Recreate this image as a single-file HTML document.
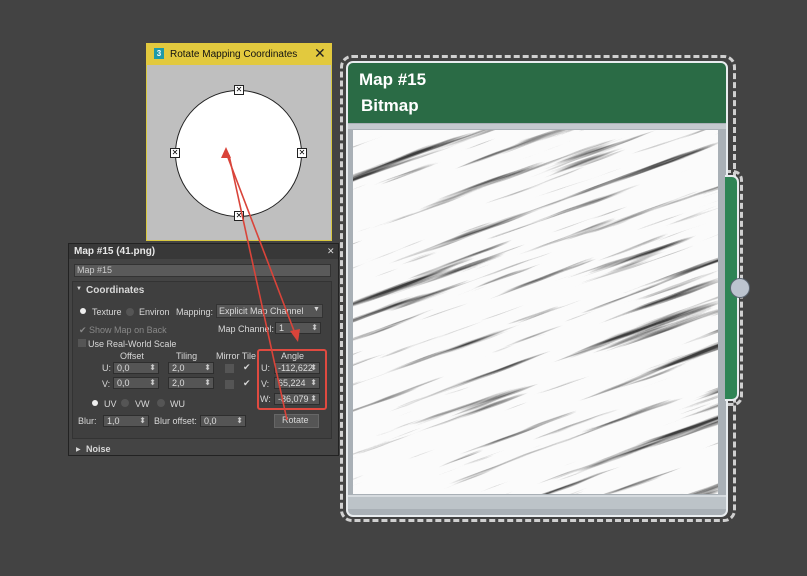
<!DOCTYPE html>
<html><head><meta charset="utf-8"><style>
*{margin:0;padding:0;box-sizing:border-box}
html,body{width:807px;height:576px;overflow:hidden}
body{background:#434343;position:relative;font-family:"Liberation Sans",Arial,sans-serif}
.abs{position:absolute}
.t{position:absolute;color:#d8d8d8;font-size:9px;white-space:nowrap}
.sp{position:absolute;background:#555;border:1px solid #2e2e2e;color:#ddd;font-size:9px;height:12px;line-height:10px;padding-left:3px}
.sp:after{content:"⬍";position:absolute;right:2px;top:0;font-size:8px;color:#ccc}
</style></head><body>

<div class="abs" style="left:340px;top:55px;width:396px;height:467px;border:3px dashed #d0d0d0;border-radius:12px"></div>
<div class="abs" style="left:725px;top:170px;width:18px;height:236px;border:3px dashed #d0d0d0;border-left:none;border-radius:0 10px 10px 0"></div>
<div class="abs" style="left:346px;top:61px;width:382px;height:456px;background:#a9b0b6;border:2px solid #e8ecef;border-radius:7px"></div>
<div class="abs" style="left:348px;top:63px;width:378px;height:60px;background:#2a6b45;border-radius:5px 5px 0 0"></div>
<div class="abs" style="left:359px;top:70px;color:#fff;font-weight:bold;font-size:17px">Map #15</div>
<div class="abs" style="left:361px;top:96px;color:#fff;font-weight:bold;font-size:17px">Bitmap</div>
<div class="abs" style="left:348px;top:124px;width:378px;height:5px;background:#c4c9ce"></div>
<div class="abs" style="left:348px;top:495px;width:378px;height:14px;background:#bcc3c8;border-top:2px solid #d5dade"></div>
<svg class="abs" style="left:353px;top:130px;overflow:hidden" width="365" height="364">
<defs>
<filter id="f" x="0" y="0" width="100%" height="100%">
<feTurbulence type="fractalNoise" baseFrequency="0.005 0.12" numOctaves="4" seed="7"/>
<feColorMatrix type="matrix" values="0 0 0 0 0  0 0 0 0 0  0 0 0 0 0  -5 0 0 0 1.95"/>
</filter>
</defs>
<rect width="365" height="364" fill="#fbfbfb"/>
<g transform="rotate(-20 182 182)" opacity=".75">
<rect x="-150" y="-150" width="665" height="665" filter="url(#f)"/>
</g>
</svg>
<div class="abs" style="left:725px;top:175px;width:14px;height:226px;background:#2f8455;border:2px solid #e8ecef;border-left:none;border-radius:0 7px 7px 0"></div>
<div class="abs" style="left:730px;top:278px;width:20px;height:20px;border-radius:50%;background:#bcc4cf;border:1px solid #5a6470"></div>

<div class="abs" style="left:146px;top:43px;width:186px;height:198px;background:#bfbfbf;border:1px solid #d8c840"></div>
<div class="abs" style="left:146px;top:43px;width:186px;height:22px;background:#e2c93e"></div>
<div class="abs" style="left:154px;top:48px;width:10px;height:11px;background:#1f9aa8;color:#fff;font-size:8px;text-align:center;line-height:11px;font-weight:bold">3</div>
<div class="abs" style="left:170px;top:49px;font-size:10px;color:#111">Rotate Mapping Coordinates</div>
<div class="abs" style="left:314px;top:45px;font-size:14px;color:#222">✕</div>
<div class="abs" style="left:175px;top:90px;width:127px;height:127px;border-radius:50%;background:#fff;border:1px solid #222"></div>
<div class="abs" style="left:234px;top:85px;width:10px;height:10px;background:#fff;border:1px solid #222;font-size:8px;line-height:8px;text-align:center">✕</div>
<div class="abs" style="left:170px;top:148px;width:10px;height:10px;background:#fff;border:1px solid #222;font-size:8px;line-height:8px;text-align:center">✕</div>
<div class="abs" style="left:297px;top:148px;width:10px;height:10px;background:#fff;border:1px solid #222;font-size:8px;line-height:8px;text-align:center">✕</div>
<div class="abs" style="left:234px;top:211px;width:10px;height:10px;background:#fff;border:1px solid #222;font-size:8px;line-height:8px;text-align:center">✕</div>

<div class="abs" style="left:68px;top:243px;width:271px;height:213px;background:#444;border:1px solid #222"></div>
<div class="abs" style="left:69px;top:244px;width:269px;height:15px;background:#383838"></div>
<div class="t" style="left:74px;top:246px;font-size:10px;color:#e8e8e8;font-weight:bold">Map #15 (41.png)</div>
<div class="t" style="left:327px;top:246px;font-size:9px">✕</div>
<div class="abs" style="left:74px;top:264px;width:257px;height:13px;background:#5a5a5a;border:1px solid #333"></div>
<div class="t" style="left:77px;top:265px;color:#ccc">Map #15</div>
<div class="abs" style="left:72px;top:281px;width:260px;height:158px;background:#3f3f3f;border:1px solid #333"></div>
<div class="t" style="left:76px;top:286px;font-size:6px">▼</div>
<div class="t" style="left:86px;top:285px;font-weight:bold;font-size:10px">Coordinates</div>
<div class="abs" style="left:80px;top:308px;width:6px;height:6px;border-radius:50%;background:#eee"></div>
<div class="t" style="left:92px;top:307px">Texture</div>
<div class="abs" style="left:126px;top:308px;width:8px;height:8px;border-radius:50%;background:#555"></div>
<div class="t" style="left:139px;top:307px">Environ</div>
<div class="t" style="left:176px;top:307px">Mapping:</div>
<div class="abs" style="left:216px;top:304px;width:107px;height:14px;background:#555;border:1px solid #333"></div>
<div class="t" style="left:219px;top:306px">Explicit Map Channel</div>
<div class="t" style="left:313px;top:306px;font-size:7px">▼</div>
<div class="t" style="left:79px;top:325px;color:#888">✔ Show Map on Back</div>
<div class="t" style="left:218px;top:324px">Map Channel:</div>
<div class="sp" style="left:275px;top:322px;width:46px">1</div>
<div class="abs" style="left:78px;top:339px;width:8px;height:8px;background:#555"></div>
<div class="t" style="left:88px;top:339px">Use Real-World Scale</div>
<div class="t" style="left:120px;top:351px">Offset</div>
<div class="t" style="left:176px;top:351px">Tiling</div>
<div class="t" style="left:216px;top:351px">Mirror Tile</div>
<div class="t" style="left:281px;top:351px">Angle</div>
<div class="t" style="left:102px;top:363px">U:</div>
<div class="sp" style="left:113px;top:362px;width:46px">0,0</div>
<div class="sp" style="left:168px;top:362px;width:46px">2,0</div>
<div class="abs" style="left:225px;top:364px;width:9px;height:9px;background:#555"></div>
<div class="t" style="left:243px;top:362px">✔</div>
<div class="t" style="left:102px;top:379px">V:</div>
<div class="sp" style="left:113px;top:377px;width:46px">0,0</div>
<div class="sp" style="left:168px;top:377px;width:46px">2,0</div>
<div class="abs" style="left:225px;top:380px;width:9px;height:9px;background:#555"></div>
<div class="t" style="left:243px;top:378px">✔</div>
<div class="t" style="left:261px;top:363px">U:</div>
<div class="sp" style="left:274px;top:362px;width:46px">-112,622</div>
<div class="t" style="left:261px;top:379px">V:</div>
<div class="sp" style="left:274px;top:377px;width:46px">65,224</div>
<div class="t" style="left:260px;top:394px">W:</div>
<div class="sp" style="left:274px;top:393px;width:46px">-86,079</div>
<div class="abs" style="left:257px;top:349px;width:70px;height:61px;border:2px solid #e04a40;border-radius:3px"></div>
<div class="abs" style="left:92px;top:400px;width:6px;height:6px;border-radius:50%;background:#eee"></div>
<div class="t" style="left:104px;top:399px">UV</div>
<div class="abs" style="left:121px;top:399px;width:8px;height:8px;border-radius:50%;background:#555"></div>
<div class="t" style="left:135px;top:399px">VW</div>
<div class="abs" style="left:157px;top:399px;width:8px;height:8px;border-radius:50%;background:#555"></div>
<div class="t" style="left:170px;top:399px">WU</div>
<div class="t" style="left:78px;top:416px">Blur:</div>
<div class="sp" style="left:103px;top:415px;width:46px">1,0</div>
<div class="t" style="left:154px;top:416px">Blur offset:</div>
<div class="sp" style="left:200px;top:415px;width:46px">0,0</div>
<div class="abs" style="left:274px;top:414px;width:45px;height:14px;background:#555;border:1px solid #666"></div>
<div class="t" style="left:282px;top:415px">Rotate</div>
<div class="t" style="left:76px;top:446px;font-size:6px">▶</div>
<div class="t" style="left:86px;top:444px;font-weight:bold;font-size:9px">Noise</div>

<svg class="abs" style="left:0;top:0" width="807" height="576">
<g stroke="#d9443a" stroke-width="1.6" fill="none">
<line x1="227" y1="155" x2="296" y2="336"/>
<line x1="229" y1="155" x2="287" y2="420"/>
</g>
<polygon points="226,147 221,158 231,158" fill="#d9443a"/>
<polygon points="298,342 290,331 300,329" fill="#d9443a"/>
</svg>
</body></html>
